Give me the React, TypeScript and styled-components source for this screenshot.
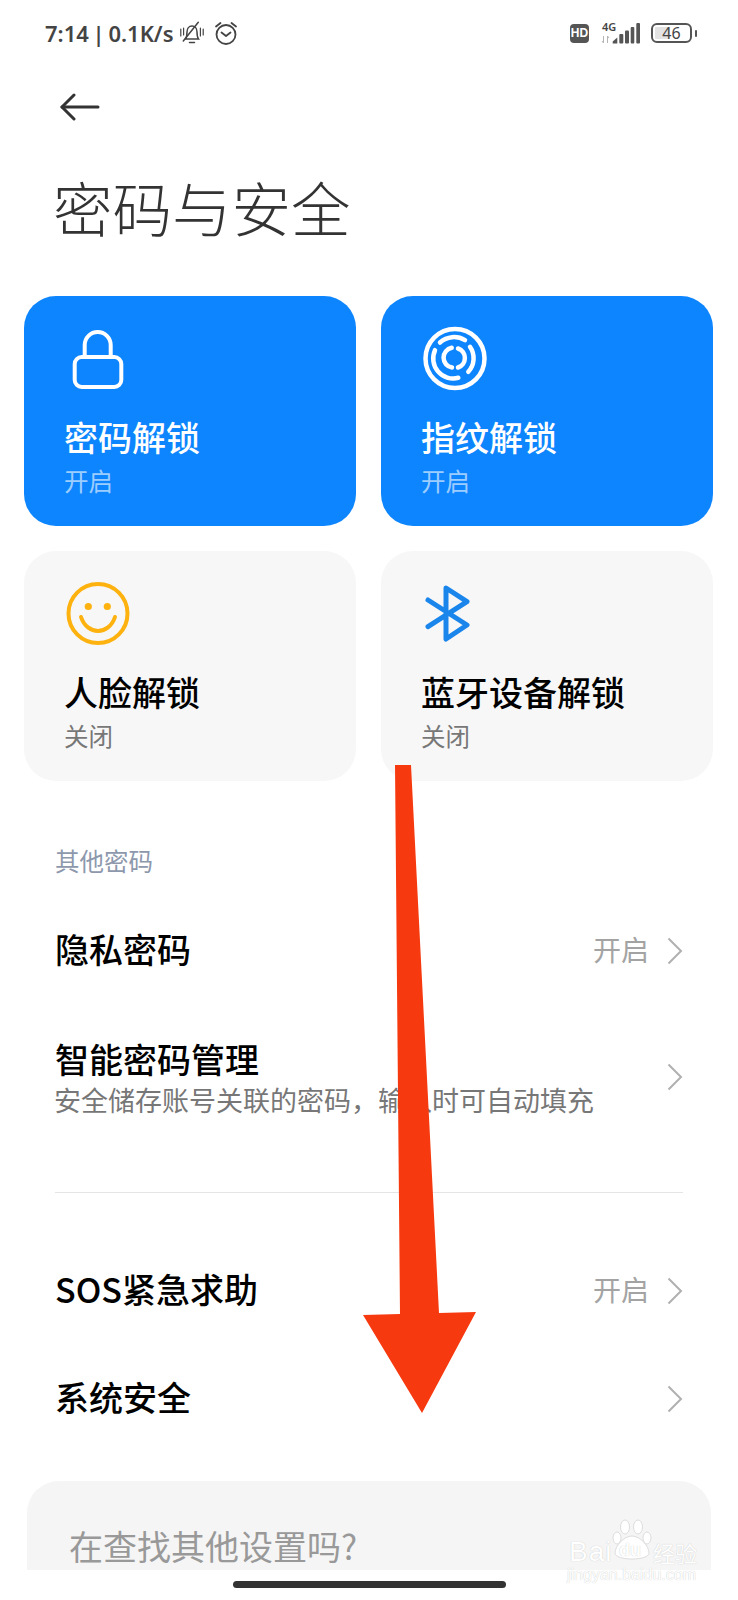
import React from 'react';
import styled, { createGlobalStyle } from 'styled-components';

const CJK = `"Noto Sans CJK SC", "Noto Sans", sans-serif`;

const GlobalStyle = createGlobalStyle`
    html, body {
        margin: 0;
        padding: 0;
        background: #fff;
    }
`;

const Page = styled.div`
    position: relative;
    width: 738px;
    height: 1600px;
    overflow: hidden;
    background: #fff;
    font-family: ${CJK};
`;

const StatusBar = styled.div`
    display: flex;
    align-items: center;
    justify-content: space-between;
    height: 66px;
    padding: 0 41px 0 45px;
`;

const StatusGroup = styled.div`
    display: flex;
    align-items: center;
`;

const StatusText = styled.span`
    font-family: "Noto Sans", sans-serif;
    font-size: 22px;
    font-weight: 600;
    word-spacing: -2px;
    color: #444;
    white-space: nowrap;
    margin-right: 6px;
`;

const StatusGap = styled.span`
    width: 10px;
`;

const HdBadge = styled.span`
    display: flex;
    align-items: center;
    justify-content: center;
    width: 19px;
    height: 19px;
    border-radius: 4px;
    background: #555;
    color: #fff;
    font-family: "Liberation Sans", sans-serif;
    font-size: 12px;
    font-weight: 700;
    margin-right: 12px;
`;

const SignalBox = styled.div`
    position: relative;
    width: 39px;
    height: 21px;
    margin-right: 11px;
`;

const FourG = styled.span`
    position: absolute;
    left: 1px;
    top: -2px;
    font-family: "Noto Sans", sans-serif;
    font-size: 11px;
    line-height: 12px;
    font-weight: 600;
    color: #444;
`;

const SignalBars = styled.svg`
    position: absolute;
    left: 0;
    top: 0;
`;

const Battery = styled.div`
    position: relative;
    display: flex;
    align-items: center;
    justify-content: center;
    box-sizing: border-box;
    width: 41px;
    height: 20px;
    border: 2px solid #555;
    border-radius: 6px;
    margin-right: 3px;
    font-family: "Noto Sans", sans-serif;
    font-size: 16px;
    color: #444;
`;

const BatteryFill = styled.span`
    position: absolute;
    left: 2px;
    top: 2px;
    bottom: 2px;
    border-radius: 1px;
    background: #e3e3e3;
`;

const BatteryValue = styled.span`
    position: relative;
    line-height: 16px;
`;

const BatteryNub = styled.span`
    width: 2px;
    height: 7px;
    background: #555;
    border-radius: 1px;
`;

const BackRow = styled.div`
    display: flex;
    align-items: center;
    height: 82px;
    padding-left: 60px;
`;

const Title = styled.h1`
    margin: 0;
    padding-left: 53px;
    height: 148px;
    font-size: 59.5px;
    line-height: 116px;
    font-weight: 300;
    color: #333;
    letter-spacing: 0;
`;

const CardGrid = styled.div`
    display: grid;
    grid-template-columns: 332px 332px;
    grid-auto-rows: 230px;
    column-gap: 25px;
    row-gap: 25px;
    padding-left: 24px;
`;

const Card = styled.div<{ $active?: boolean }>`
    box-sizing: border-box;
    padding: 29px 0 0 40px;
    border-radius: 32px;
    background: ${p => (p.$active ? '#0d85ff' : '#f7f7f7')};
    color: ${p => (p.$active ? '#fff' : '#000')};
`;

const CardIcon = styled.div`
    display: flex;
    align-items: center;
    height: 66px;
    margin-left: 1px;
`;

const CardTitle = styled.div`
    margin-top: 24px;
    font-size: 34px;
    line-height: 44px;
    font-weight: 500;
`;

const CardStatus = styled.div<{ $active?: boolean }>`
    margin-top: 5px;
    font-size: 24.5px;
    line-height: 34px;
    color: ${p => (p.$active ? 'rgba(255,255,255,0.6)' : '#777')};
`;

const SectionLabel = styled.div`
    margin-top: 63px;
    padding-left: 55px;
    font-size: 24.5px;
    line-height: 34px;
    color: #8d98ad;
`;

const ListGroup = styled.div`
    margin-top: 20px;
`;

const Row = styled.div<{ $height: number }>`
    display: flex;
    align-items: center;
    justify-content: space-between;
    box-sizing: border-box;
    height: ${p => p.$height}px;
    padding: 0 55px;
`;

const RowText = styled.div`
    display: flex;
    flex-direction: column;
`;

const RowTitle = styled.div`
    font-size: 34px;
    line-height: 44px;
    font-weight: 500;
    color: #000;
`;

const SingleRowTitle = styled(RowTitle)`
    margin-bottom: 4px;
`;

const RowSub = styled.div`
    margin-top: 1px;
    margin-left: -1px;
    font-size: 27px;
    line-height: 36px;
    color: #777;
    white-space: nowrap;
`;

const RowRight = styled.div`
    display: flex;
    align-items: center;
`;

const RowValue = styled.span`
    margin: 0 18px 4px 0;
    font-size: 28px;
    color: #a3a3a3;
`;

const Divider = styled.div`
    height: 1px;
    margin: 42px 55px 44px;
    background: #e5e5e5;
`;

const SearchCard = styled.div`
    box-sizing: border-box;
    height: 130px;
    margin: 28px 27px 0;
    padding: 43px 0 0 42px;
    border-radius: 32px 32px 0 0;
    background: #f5f5f5;
    font-size: 34px;
    line-height: 44px;
    color: #999;
`;

const BottomBar = styled.div`
    position: absolute;
    left: 0;
    right: 0;
    bottom: 0;
    display: flex;
    justify-content: center;
    height: 30px;
    padding-top: 11px;
    box-sizing: border-box;
    background: #fff;
`;

const HomeIndicator = styled.div`
    width: 273px;
    height: 7px;
    border-radius: 4px;
    background: #333;
`;

const Annotation = styled.svg`
    position: absolute;
    left: 0;
    top: 0;
    pointer-events: none;
`;

const Watermark = styled.div`
    position: absolute;
    left: 566px;
    top: 1518px;
    width: 134px;
    height: 68px;
    color: #fff;
    text-shadow: 0 0 1px #bdbdbd;
    white-space: nowrap;
`;

const WatermarkPaw = styled.svg`
    position: absolute;
    left: 46px;
    top: 1px;
`;

const WatermarkBai = styled.span`
    position: absolute;
    left: 3px;
    top: 19px;
    font-family: "Liberation Sans", sans-serif;
    font-size: 28px;
    line-height: 30px;
    letter-spacing: 1px;
`;

const WatermarkDu = styled.span`
    position: absolute;
    left: 53px;
    top: 22px;
    font-family: "Liberation Sans", sans-serif;
    font-size: 18px;
    font-weight: 700;
    line-height: 20px;
`;

const WatermarkCn = styled.span`
    position: absolute;
    left: 87px;
    top: 18px;
    font-size: 22px;
    line-height: 32px;
`;

const WatermarkUrl = styled.span`
    position: absolute;
    left: 1px;
    top: 48px;
    font-family: "Liberation Sans", sans-serif;
    font-size: 16px;
    line-height: 18px;
`;

const Chevron = () => (
    <svg width="16" height="28" viewBox="0 0 16 28" fill="none">
        <path d="M1.5 1.5 L14 14 L1.5 26.5" stroke="#b0b0b0" strokeWidth="2" />
    </svg>
);

const LockIcon = () => (
    <svg width="66" height="64" viewBox="0 0 66 64" fill="none" stroke="#fff" strokeWidth="4">
        <rect x="9.7" y="31" width="46.6" height="30" rx="7" />
        <path d="M19.7 31 V19 a13 13 0 0 1 26 0 V31" />
    </svg>
);

const FingerprintIcon = () => (
    <svg width="66" height="66" viewBox="0 0 66 66" fill="none" stroke="#fff" strokeWidth="4.5" strokeLinecap="round">
        <circle cx="33" cy="33.5" r="29.5" />
        <path d="M18 17.5 A21 21 0 0 1 43 15.2" />
        <path d="M48 21.8 A20 20 0 0 1 46.3 46.8" />
        <path d="M36.3 52.8 A20 20 0 0 1 13 25.2" />
        <path d="M29.7 22.8 A10 10 0 0 0 30 42.5" />
        <path d="M36 23.5 A10 10 0 0 1 36 42.5" />
    </svg>
);

const SmileIcon = () => (
    <svg width="66" height="66" viewBox="0 0 66 66" fill="none" stroke="#fdb20f" strokeWidth="4" strokeLinecap="round">
        <circle cx="33" cy="33.5" r="29.5" />
        <circle cx="23.3" cy="26.5" r="3.6" fill="#fdb20f" stroke="none" />
        <circle cx="42.3" cy="26.5" r="3.6" fill="#fdb20f" stroke="none" />
        <path d="M16 37 C22 55.5 44 55.5 50 37" />
    </svg>
);

const BluetoothIcon = () => (
    <svg width="50" height="62" viewBox="0 0 50 62" fill="none" stroke="#1a86ec" strokeWidth="5" strokeLinejoin="round" strokeLinecap="round">
        <path d="M6 18 L45 43 L24 57 V6 L45 19.7 L6 44.7" />
    </svg>
);

const BackArrow = () => (
    <svg width="40" height="28" viewBox="0 0 40 28" fill="none" stroke="#333" strokeWidth="3" strokeLinecap="round" strokeLinejoin="round">
        <path d="M14 2 L2 14 L14 26" />
        <path d="M2 14 H38" />
    </svg>
);

const MutedBell = () => (
    <svg width="24" height="24" viewBox="0 0 24 24" fill="none" stroke="#444" strokeWidth="1.5" strokeLinecap="round">
        <path d="M5.5 18 H18.5 C17 16 17 14 17 11 C17 7.5 15 5 12 5 C9 5 7 7.5 7 11 C7 14 7 16 5.5 18 Z" />
        <path d="M9.5 21.5 H14.5" />
        <path d="M3.3 20 L18.3 1.3" />
        <path d="M0.8 8 V15 M3.6 7 V14 M20.4 7 V15 M23.2 8 V14" strokeWidth="1.2" />
    </svg>
);

const AlarmClock = () => (
    <svg width="24" height="26" viewBox="0 0 24 26" fill="none" stroke="#444" strokeWidth="1.8" strokeLinecap="round" strokeLinejoin="round">
        <circle cx="12" cy="14.5" r="9.5" />
        <path d="M7.5 12.5 L12 16 L16.5 12.5" />
        <path d="M2 6.5 L6.5 3 M22 6.5 L17.5 3" />
    </svg>
);

const SignalIcon = () => (
    <SignalBars width="39" height="21" viewBox="0 0 39 21">
        <path d="M2.5 13 V20 M1 18 L2.5 20 M6.5 20 V13 M6.5 13 L8 15" stroke="#b5b5b5" strokeWidth="1" fill="none" />
        <path d="M11.7 20.5 V18.5 L16.3 14.5 V20.5 Z" fill="#555" />
        <rect x="18.3" y="11" width="4" height="9.5" rx="1" fill="#555" />
        <rect x="24" y="7.5" width="4" height="13" rx="1" fill="#555" />
        <rect x="29.7" y="4" width="3.6" height="16.5" rx="1" fill="#555" />
        <rect x="35.3" y="0" width="3.7" height="20.5" rx="1" fill="#555" />
    </SignalBars>
);

const cards = [
    { title: '密码解锁', status: '开启', active: true, icon: <LockIcon /> },
    { title: '指纹解锁', status: '开启', active: true, icon: <FingerprintIcon /> },
    { title: '人脸解锁', status: '关闭', active: false, icon: <SmileIcon /> },
    { title: '蓝牙设备解锁', status: '关闭', active: false, icon: <BluetoothIcon /> },
];

export default function App() {
    return (
        <Page>
            <GlobalStyle />
            <StatusBar>
                <StatusGroup>
                    <StatusText>7:14 | 0.1K/s</StatusText>
                    <MutedBell />
                    <StatusGap />
                    <AlarmClock />
                </StatusGroup>
                <StatusGroup>
                    <HdBadge>HD</HdBadge>
                    <SignalBox>
                        <FourG>4G</FourG>
                        <SignalIcon />
                    </SignalBox>
                    <Battery>
                        <BatteryFill style={{ width: `${46 * 0.33}px` }} />
                        <BatteryValue>46</BatteryValue>
                    </Battery>
                    <BatteryNub />
                </StatusGroup>
            </StatusBar>
            <BackRow>
                <BackArrow />
            </BackRow>
            <Title>密码与安全</Title>
            <CardGrid>
                {cards.map(card => (
                    <Card key={card.title} $active={card.active}>
                        <CardIcon>{card.icon}</CardIcon>
                        <CardTitle>{card.title}</CardTitle>
                        <CardStatus $active={card.active}>{card.status}</CardStatus>
                    </Card>
                ))}
            </CardGrid>
            <SectionLabel>其他密码</SectionLabel>
            <ListGroup>
                <Row $height={106}>
                    <SingleRowTitle>隐私密码</SingleRowTitle>
                    <RowRight>
                        <RowValue>开启</RowValue>
                        <Chevron />
                    </RowRight>
                </Row>
                <Row $height={146}>
                    <RowText>
                        <RowTitle>智能密码管理</RowTitle>
                        <RowSub>安全储存账号关联的密码，输入时可自动填充</RowSub>
                    </RowText>
                    <Chevron />
                </Row>
            </ListGroup>
            <Divider />
            <Row $height={108}>
                <SingleRowTitle>SOS紧急求助</SingleRowTitle>
                <RowRight>
                    <RowValue>开启</RowValue>
                    <Chevron />
                </RowRight>
            </Row>
            <Row $height={108}>
                <SingleRowTitle>系统安全</SingleRowTitle>
                <Chevron />
            </Row>
            <SearchCard>在查找其他设置吗?</SearchCard>
            <BottomBar>
                <HomeIndicator />
            </BottomBar>
            <Watermark>
                <WatermarkPaw width="42" height="44" viewBox="0 0 42 44" fill="#fff" stroke="#d4d4d4" strokeWidth="0.8">
                    <ellipse cx="5" cy="19" rx="4" ry="6" />
                    <ellipse cx="13" cy="8" rx="4.5" ry="7" />
                    <ellipse cx="26" cy="8" rx="4.5" ry="7" />
                    <ellipse cx="35" cy="19" rx="4" ry="6" />
                    <path d="M20 17 C12 17 3 27 3 34 C3 42 37 42 37 34 C37 27 28 17 20 17 Z" />
                </WatermarkPaw>
                <WatermarkBai>Bai</WatermarkBai>
                <WatermarkDu>du</WatermarkDu>
                <WatermarkCn>经验</WatermarkCn>
                <WatermarkUrl>jingyan.baidu.com</WatermarkUrl>
            </Watermark>
            <Annotation width="738" height="1600" viewBox="0 0 738 1600">
                <polygon points="395,765 411,765 439,1313 476,1312 422,1413 363,1315 400,1314" fill="#f7390f" />
            </Annotation>
        </Page>
    );
}
